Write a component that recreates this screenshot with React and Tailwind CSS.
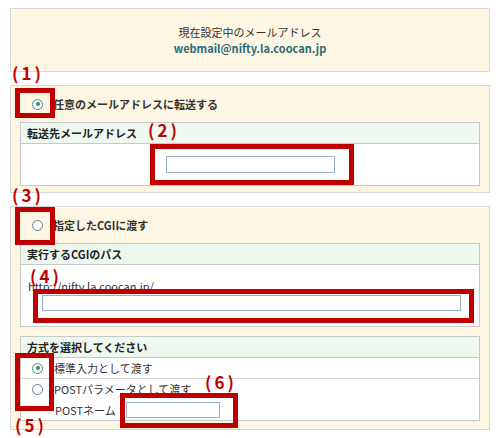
import React from "react";

const font = { fontFamily: '"Noto Sans CJK JP", "DejaVu Sans", sans-serif' };

const Radio = ({ checked }) => (
  <span className="inline-flex h-[11px] w-[11px] items-center justify-center rounded-full border border-[#5a7fa0] bg-white">
    {checked && <span className="h-[4px] w-[4px] rounded-full bg-[#2a9a3a]" />}
  </span>
);

const Box = ({ cls }) => <div className={`absolute border-[5px] border-[#c00000] ${cls}`} />;
const Num = ({ cls, children }) => (
  <div className={`absolute text-[17px] font-bold text-[#c00000] leading-none tracking-[3px] ${cls}`}>{children}</div>
);

const Header = ({ children }) => (
  <div className="h-[21px] bg-[#eef8ef] border-b border-[#c8c8c8] px-[6px] text-[11px] font-bold leading-[21px] text-[#222]">
    {children}
  </div>
);

export default function App() {
  return (
    <div className="relative w-[500px] h-[438px] bg-white text-[#333]" style={font}>
      <div className="pt-[8px] px-[10px]">
        <div className="h-[64px] border border-[#d8d8d8] bg-[#fdf6e2] flex flex-col items-center justify-center gap-[2px] text-[11px]">
          <div className="leading-[14px]">現在設定中のメールアドレス</div>
          <div className="font-bold text-[#2a6b78] leading-[14px]">webmail@nifty.la.coocan.jp</div>
        </div>

        <div className="mt-[13px] h-[108px] border border-[#d8d8d8] bg-[#fdf6e2] px-[9px]">
          <div className="flex h-[36px] items-center gap-[10px] pl-[12px] text-[11px] font-bold">
            <Radio checked />
            <span>任意のメールアドレスに転送する</span>
          </div>
          <div className="border border-[#c8c8c8] bg-white">
            <Header>転送先メールアドレス</Header>
            <div className="flex h-[41px] items-center pl-[145px]">
              <div className="h-[17px] w-[169px] border border-[#9ab0c8] bg-white" />
            </div>
          </div>
        </div>

        <div className="mt-[13px] h-[224px] border border-[#d8d8d8] bg-[#fdf6e2] px-[9px]">
          <div className="flex h-[36px] items-center gap-[10px] pl-[12px] text-[11px] font-bold">
            <Radio />
            <span>指定したCGIに渡す</span>
          </div>
          <div className="border border-[#c8c8c8] bg-white">
            <Header>実行するCGIのパス</Header>
            <div className="h-[61px] pl-[7px] pt-[14px] text-[11px]">
              <div className="leading-[14px]">http://nifty.la.coocan.jp/</div>
              <div className="mt-[2px] ml-[14px] h-[16px] w-[419px] border border-[#9ab0c8] bg-white" />
            </div>
          </div>
          <div className="mt-[9px] border border-[#c8c8c8] bg-white text-[11px]">
            <Header>方式を選択してください</Header>
            <div className="flex h-[21px] items-center gap-[11px] border-b border-[#d8d8d8] pl-[11px]">
              <Radio checked />
              <span>標準入力として渡す</span>
            </div>
            <div className="flex h-[21px] items-center gap-[11px] pl-[11px]">
              <Radio />
              <span>POSTパラメータとして渡す</span>
            </div>
            <div className="flex h-[20px] items-center pl-[34px]">
              <span>POSTネーム</span>
              <div className="ml-[10px] h-[16px] w-[94px] border border-[#9ab0c8] bg-white" />
            </div>
          </div>
        </div>
      </div>

      <Num cls="left-[12px] top-[64px]">(1)</Num>
      <Box cls="left-[15px] top-[88px] w-[40px] h-[30px]" />
      <Num cls="left-[148px] top-[121px]">(2)</Num>
      <Box cls="left-[150px] top-[144px] w-[204px] h-[41px]" />
      <Num cls="left-[12px] top-[186px]">(3)</Num>
      <Box cls="left-[15px] top-[207px] w-[40px] h-[38px]" />
      <Num cls="left-[30px] top-[267px]">(4)</Num>
      <Box cls="left-[33px] top-[289px] w-[441px] h-[34px]" />
      <Box cls="left-[15px] top-[353px] w-[39px] h-[58px]" />
      <Num cls="left-[15px] top-[416px]">(5)</Num>
      <Num cls="left-[205px] top-[373px]">(6)</Num>
      <Box cls="left-[120px] top-[393px] w-[118px] h-[35px]" />
    </div>
  );
}
